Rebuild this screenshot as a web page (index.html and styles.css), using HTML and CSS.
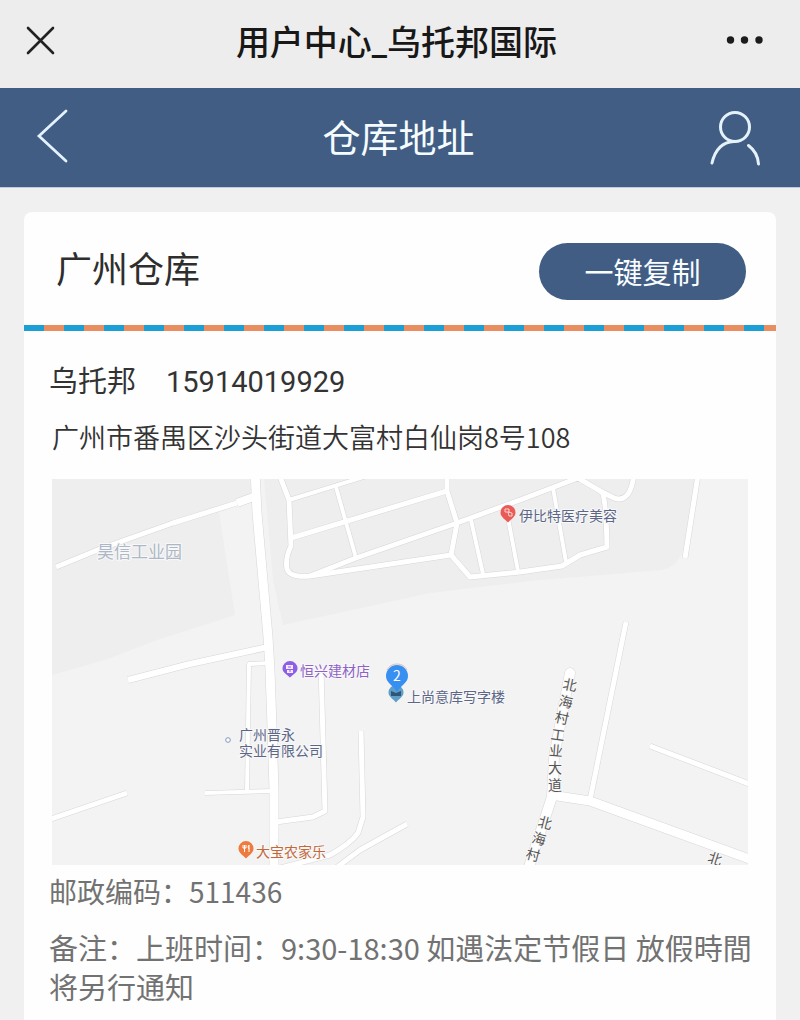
FILE: index.html
```html
<!DOCTYPE html>
<html lang="zh-CN">
<head>
<meta charset="utf-8">
<meta name="viewport" content="width=device-width, initial-scale=1">
<title>用户中心_乌托邦国际</title>
<link rel="stylesheet" href="styles.css">
</head>
<body>
<header class="titlebar">
  <button class="icon-button close" type="button" aria-label="关闭">
    <svg class="icon" width="32" height="32" viewBox="0 0 32 32" stroke="#222" stroke-width="2.6" stroke-linecap="round"><path d="M4 3L29 28M29 3L4 28"/></svg>
  </button>
  <div class="titlebar-text">用户中心_乌托邦国际</div>
  <button class="icon-button" type="button" aria-label="更多">
    <svg class="icon" width="40" height="32" viewBox="0 0 40 32" fill="#1c1c1c"><circle cx="5.500" cy="15" r="3.700"/><circle cx="19.500" cy="15" r="3.700"/><circle cx="34" cy="15" r="3.700"/></svg>
  </button>
</header>
<nav class="navbar">
  <a class="nav-link" href="#back" aria-label="返回">
    <svg class="icon" width="32" height="56" viewBox="0 0 32 56" fill="none" stroke="#e4f3fb" stroke-width="2.800" stroke-linecap="round" stroke-linejoin="miter"><path d="M30 2L3 27L30 52"/></svg>
  </a>
  <h1 class="nav-title">仓库地址</h1>
  <a class="nav-link" href="#user" aria-label="用户">
    <svg class="icon" width="52" height="60" viewBox="0 0 52 60" fill="none" stroke="#e4f3fb" stroke-width="3" stroke-linecap="round"><circle cx="26" cy="20" r="14.500"/><path d="M3 56C6 43 13 35 25 34.500M39.500 38.500C45.500 43 49 49 49.500 57"/></svg>
  </a>
</nav>
<main class="page">
  <section class="card">
    <header class="card-head">
      <h2 class="card-title">广州仓库</h2>
      <button class="copy-button" type="button">一键复制</button>
    </header>
    <div class="airmail"></div>
    <div class="card-body">
      <p class="contact"><span>乌托邦</span><span>15914019929</span></p>
      <p class="address">广州市番禺区沙头街道大富村白仙岗8号108</p>
      <svg class="map" viewBox="52 479 696 386" role="img" aria-label="仓库位置地图">
        <path class="block" d="M52 479H249L253 498L218 506L224 545L235 615L195 628L160 639L105 660L52 675Z"/>
        <path class="block" d="M264 479H695L684 545Q680 566 662 570L530 581L480 587L430 593L283 625L273 580Z"/>
        <defs>
          <g id="roads">
            <path class="w5" d="M56 567L100 549L173 523L237 503"/>
            <path class="w8" d="M237 503L256 496"/>
            <path class="w9" d="M255 470L257 513L268 637L270 670L272 727L274 790V870"/>
            <path class="w6" d="M128 680L190 664L268 647"/>
            <path class="w4" d="M270 663L249 664L247 791"/>
            <path class="w4" d="M205 793L273 791"/>
            <path class="w5" d="M48 820L127 793"/>
            <path class="w5" d="M321 667L325 811L313 817L276 822"/>
            <path class="w5" d="M361 731L363 817L358 833Q350 844 330 855L280 868"/>
            <path class="w5" d="M407 824L360 850L336 868"/>
            <path class="w5" d="M626 622L590 800"/>
            <path class="w5" d="M650 746L752 785"/>
            <path class="w5" d="M698 475L685 558"/>
            <path class="round w10" d="M570 673L554 757L552 797L546 815L528 870"/>
            <path class="w9" d="M551 795L590 801L752 860"/>
            <path class="w5" d="M279 474L289 500L291 546Q285 558 287 569Q290 578 310 576L451 555"/>
            <path class="w4" d="M289 500L370 475"/>
            <path class="w5" d="M291 538L447 491"/>
            <path class="w4" d="M336 487L356 558"/>
            <path class="w5" d="M310 576L356 558L457 523L520 500L578 478L602 492Q606 498 607 547L580 555L562 566L520 572L470 577L451 555L457 523L447 491V475"/>
            <path class="w4" d="M471 520L483 574M508 518L518 571M553 488L566 562"/>
            <path class="w5" d="M600 491L614 498Q622 501 627 495Q632 490 634 474"/>
          </g>
        </defs>
        <use href="#roads" class="road-edge"/>
        <use href="#roads" class="road-fill"/>

        <g class="labels">
          <text class="area" x="97" y="558">昊信工业园</text>
          <text x="519" y="521">伊比特医疗美容</text>
          <text class="shop" x="300" y="676">恒兴建材店</text>
          <text x="407" y="702">上尚意库写字楼</text>
          <text x="239" y="740">广州晋永</text>
          <text x="239" y="756">实业有限公司</text>
          <text class="food" x="256" y="857">大宝农家乐</text>
        </g>
        <g class="street">
          <text x="563" y="690" transform="rotate(12 570 685)">北</text>
          <text x="559" y="707" transform="rotate(12 566 702)">海</text>
          <text x="555" y="723" transform="rotate(12 562 718)">村</text>
          <text x="551" y="740" transform="rotate(8 558 735)">工</text>
          <text x="549" y="756" transform="rotate(5 556 751)">业</text>
          <text x="548" y="773">大</text>
          <text x="548" y="790">道</text>
          <text x="538" y="828" transform="rotate(15 545 823)">北</text>
          <text x="532" y="844" transform="rotate(15 539 839)">海</text>
          <text x="526" y="860" transform="rotate(15 533 855)">村</text>
          <text x="708" y="864" transform="rotate(18 715 859)">北</text>
        </g>
        <circle cx="228" cy="740" r="2.300" fill="#fff" stroke="#7f96bb"/>

        <path fill="#ea5a56" d="M508 505a7.500 7.500 0 0 1 7.500 7.500c0 4-3.500 6-7.500 10c-4-4-7.500-6-7.500-10a7.500 7.500 0 0 1 7.500-7.500z"/>
        <path fill="none" stroke="#fbd3d0" d="M505 509h4v3h-4zM508 512l4 1v3h-3z"/>
        <path fill="#8f5ee6" d="M290 661a7.500 7.500 0 0 1 7.500 7.500c0 4-3.500 5-7.500 9c-4-4-7.500-5-7.500-9a7.500 7.500 0 0 1 7.500-7.500z"/>
        <path fill="#f3eaff" d="M286 665h7v4h-7zM287 670h6v3h-6z"/>
        <path stroke="#8f5ee6" fill="none" d="M288 667h3M289 671h2"/>
        <path fill="#ee7a3e" d="M246 841a7.500 7.500 0 0 1 7.500 7.500c0 4-3.500 6-7.500 10c-4-4-7.500-6-7.500-10a7.500 7.500 0 0 1 7.500-7.500z"/>
        <path fill="none" stroke="#fff" d="M243 845v3h3v-3M244.500 845v7M249 845v7M249 845q-2 2 0 4"/>
        <path fill="#5d9fc9" d="M396 685a7.500 7.500 0 0 1 7.500 7.500c0 4-4 6-7.500 10c-3.500-4-7.500-6-7.500-10a7.500 7.500 0 0 1 7.500-7.500z"/>
        <path fill="#315673" d="M391 691l5 2l5-2v5h-10z"/>
        <path fill="none" stroke="#dbc0bb" d="M387 670q3-6 10-6t10 6"/>
        <path fill="#378ff2" d="M397 665a11 11 0 0 1 11 11c0 7-7 9-11 16c-4-7-11-9-11-16a11 11 0 0 1 11-11z"/>
        <text class="pin-number" x="397" y="681">2</text>
      </svg>
      <p class="detail">邮政编码：511436</p>
      <p class="detail note">备注：上班时间：9:30-18:30 如遇法定节假日 放假時間将另行通知</p>
    </div>
  </section>
</main>
</body>
</html>
```
FILE: styles.css
```css
* {
  box-sizing: border-box;
}

body {
  margin: 0;
  background: #f0f0f1;
  color: #333;
  font-family: "Noto Sans CJK SC", sans-serif;
}

h1, h2, p {
  margin: 0;
  font-weight: 400;
}

.icon {
  display: block;
}

.titlebar {
  display: flex;
  align-items: center;
  justify-content: space-between;
  height: 88px;
  padding: 0 35px 6px 24px;
  background: #ededed;
}

.icon-button {
  padding: 0;
  border: 0;
  background: none;
}

.close {
  width: 44px;
}

.titlebar-text {
  padding-top: 4px;
  color: #181818;
  font-family: Roboto, "Noto Sans CJK SC", sans-serif;
  font-size: 34px;
  font-weight: 500;
  line-height: 48px;
}

.navbar {
  display: flex;
  align-items: center;
  justify-content: space-between;
  height: 100px;
  padding: 0 39px 2px 36px;
  border-bottom: 1px solid #c3cbe0;
  background: #415d84;
}

.nav-link {
  flex: 0 0 52px;
}

.nav-title {
  color: #f4fcff;
  font-size: 38px;
  line-height: 52px;
  padding-bottom: 2px;
}

.page {
  padding: 24px 24px 0;
}

.card {
  border-radius: 8px 8px 0 0;
  background: #fefefe;
}

.card-head {
  display: flex;
  align-items: center;
  justify-content: space-between;
  height: 113px;
  padding: 5px 30px 0 32px;
}

.card-title {
  color: #2e2e2e;
  font-size: 36px;
  line-height: 52px;
  padding-bottom: 8px;
}

.copy-button {
  width: 207px;
  height: 57px;
  padding: 0;
  border: 0;
  border-radius: 29px;
  background: #415d84;
  color: #fafdff;
  font-family: inherit;
  font-size: 29px;
}

.airmail {
  height: 6px;
  background: repeating-linear-gradient(90deg, #1b9fd4 0 20px, #e98e60 20px 40px);
}

.card-body {
  padding: 31px 16px 14px 25px;
}

.contact {
  display: flex;
  gap: 30px;
  font-family: Roboto, "Noto Sans CJK SC", sans-serif;
  font-size: 29px;
  line-height: 40px;
}

.address {
  padding: 15px 3px 0;
  font-size: 27px;
  font-weight: 350;
  line-height: 40px;
}

.map {
  display: block;
  width: calc(100% - 15px);
  margin: 22px 0 6px 3px;
  background: #f3f3f3;
  overflow: hidden;
}

.block {
  fill: #eee;
}

.road-edge,
.road-fill {
  fill: none;
  stroke-linejoin: round;
}

.road-edge {
  stroke: #d6d6d6;
  --edge: 1px;
}

.road-fill {
  stroke: #fff;
  --edge: 0px;
}

.w4 { stroke-width: calc(4px + var(--edge)); }
.w5 { stroke-width: calc(5px + var(--edge)); }
.w6 { stroke-width: calc(6px + var(--edge)); }
.w8 { stroke-width: calc(8px + var(--edge)); }
.w9 { stroke-width: calc(9px + var(--edge)); }
.w10 { stroke-width: calc(10px + var(--edge)); }

.round {
  stroke-linecap: round;
}

.labels,
.street {
  fill: #5c6788;
  stroke: #f8f8f8;
  stroke-width: 2px;
  paint-order: stroke;
  font-size: 14px;
}

.street {
  fill: #555;
}

.area {
  fill: #aeb7c6;
  font-size: 17px;
}

.shop {
  fill: #8e62c8;
}

.food {
  fill: #c2683b;
}

.pin-number {
  fill: #fff;
  font-size: 14px;
  text-anchor: middle;
}

.detail {
  color: #727272;
  font-size: 28px;
  line-height: 40px;
}

.note {
  padding-top: 17px;
  font-size: 29px;
  line-height: 39px;
}
```
